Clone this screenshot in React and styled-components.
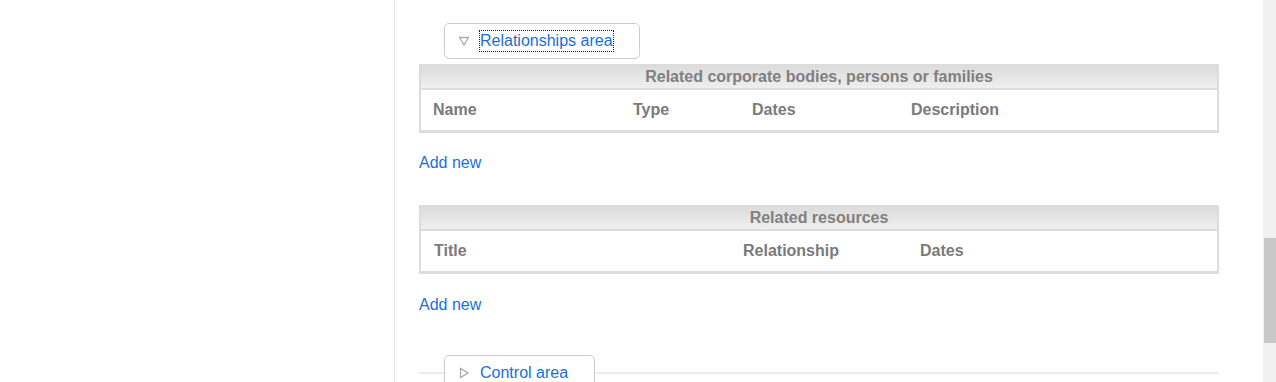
import React from 'react';
import styled, { createGlobalStyle } from 'styled-components';

const GlobalStyle = createGlobalStyle`
  html, body {
    margin: 0;
    padding: 0;
    background: #fff;
    overflow: hidden;
  }
  body {
    font-family: "Liberation Sans", Arial, sans-serif;
  }
`;

const Triangle = ({ open }) => (
  <svg width="12" height="12" viewBox="0 0 12 12">
    {open ? (
      <polygon points="1.5,2.5 10.5,2.5 6,10" fill="none" stroke="#a9a9a9" strokeWidth="1.3" />
    ) : (
      <polygon points="2.5,1.5 2.5,10.5 10,6" fill="none" stroke="#a9a9a9" strokeWidth="1.3" />
    )}
  </svg>
);

const App = () => {
  return (
    <>
      <GlobalStyle />
      <Page>
        <Sidebar />
        <Main>
          <Divider />
          <LegendRow>
            <Legend>
              <Triangle open />
              <LegendText focused>Relationships area</LegendText>
            </Legend>
          </LegendRow>

          <Table top="5px">
            <Caption>Related corporate bodies, persons or families</Caption>
            <HeadRow cols="200px 119px 159px 1fr">
              <HeadCell>Name</HeadCell>
              <HeadCell>Type</HeadCell>
              <HeadCell>Dates</HeadCell>
              <HeadCell>Description</HeadCell>
            </HeadRow>
          </Table>
          <AddNew href="#" top="21px">Add new</AddNew>

          <Table top="33px">
            <Caption>Related resources</Caption>
            <HeadRow cols="309px 177px 1fr">
              <HeadCell pad="13px">Title</HeadCell>
              <HeadCell pad="13px">Relationship</HeadCell>
              <HeadCell pad="13px">Dates</HeadCell>
            </HeadRow>
          </Table>
          <AddNew href="#" top="22px">Add new</AddNew>

          <CollapsedRow>
            <Rule width="25px" />
            <Legend width="151px">
              <Triangle />
              <LegendText>Control area</LegendText>
            </Legend>
            <Rule />
          </CollapsedRow>
        </Main>
        <Scrollbar>
          <Thumb />
        </Scrollbar>
      </Page>
    </>
  );
};

export default App;

const Page = styled.div`
  display: flex;
  height: 382px;
  width: 1276px;
`;

const Sidebar = styled.div`
  width: 394px;
  flex: none;
  border-right: 1px solid #e8e8e8;
`;

const Main = styled.div`
  width: 800px;
  flex: none;
  padding: 0 44px 0 24px;
  display: flex;
  flex-direction: column;
`;

const Divider = styled.div`
  margin-top: 5px;
  height: 2px;
  background: #ececec;
`;

const LegendRow = styled.div`
  display: flex;
  padding-left: 25px;
  margin-top: 18px;
`;

const Legend = styled.div`
  box-sizing: border-box;
  width: ${(p) => p.width || '196px'};
  height: 36px;
  border: 1px solid #cccccc;
  border-radius: 5px;
  background: #fff;
  display: flex;
  align-items: center;
  gap: 10px;
  padding-left: 13px;
  flex: none;
`;

const LegendText = styled.span`
  font-size: 16px;
  color: #1b6fd8;
  line-height: 18px;
  padding: 1px 0;
  outline: ${(p) => (p.focused ? '1px dotted #222' : 'none')};
  outline-offset: 0;
`;

const Table = styled.div`
  margin-top: ${(p) => p.top || '6px'};
  border: 2px solid #dcdcdc;
  border-bottom-width: 3px;
`;

const Caption = styled.div`
  height: 22px;
  line-height: 21px;
  text-align: center;
  font-size: 16px;
  font-weight: 700;
  color: #808080;
  background: linear-gradient(#dcdcdc, #efefef);
  border-bottom: 2px solid #dcdcdc;
`;

const HeadRow = styled.div`
  display: grid;
  grid-template-columns: ${(p) => p.cols};
  height: 40px;
  align-items: center;
  background: #fff;
`;

const HeadCell = styled.div`
  padding-left: ${(p) => p.pad || '12px'};
  font-size: 16px;
  font-weight: 700;
  color: #7a7a7a;
`;

const AddNew = styled.a`
  display: block;
  margin-top: ${(p) => p.top};
  font-size: 16px;
  line-height: 18px;
  color: #1b6fd8;
  text-decoration: none;
`;

const CollapsedRow = styled.div`
  display: flex;
  align-items: center;
  margin-top: 41px;
`;

const Rule = styled.div`
  height: 2px;
  background: #ececec;
  flex: ${(p) => (p.width ? 'none' : '1')};
  width: ${(p) => p.width || 'auto'};
`;

const Scrollbar = styled.div`
  margin-left: auto;
  width: 13px;
  height: 382px;
  background: #f1f1f1;
  position: relative;
`;

const Thumb = styled.div`
  position: absolute;
  top: 238px;
  left: 1px;
  right: 0;
  height: 105px;
  background: #c8c8c8;
`;
